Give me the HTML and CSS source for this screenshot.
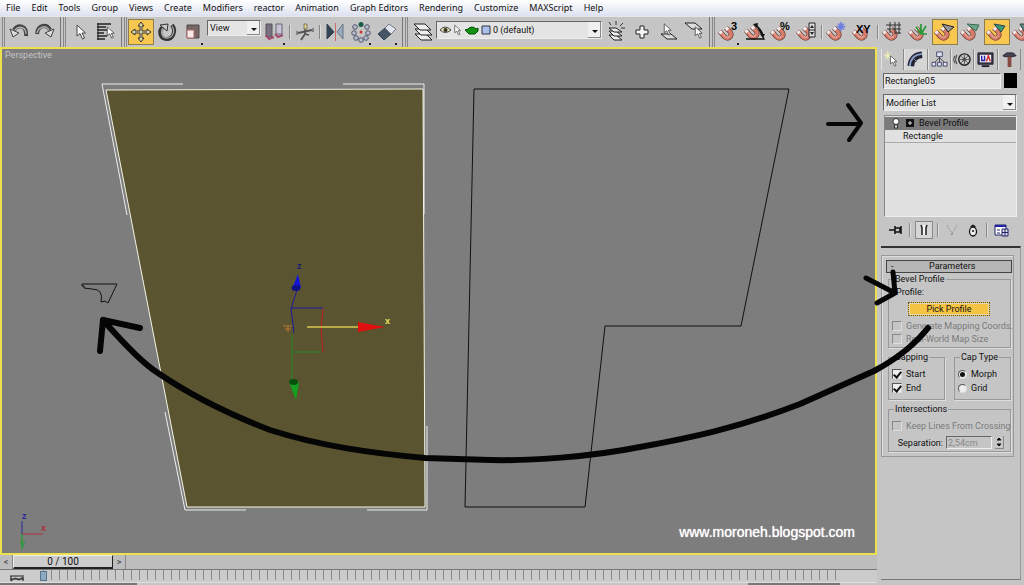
FILE: index.html
```html
<!DOCTYPE html>
<html lang="en">
<head>
<meta charset="utf-8">
<title>Perspective</title>
<link rel="stylesheet" href="styles.css">
</head>
<body>
<svg class="defs" aria-hidden="true">
  <symbol id="magnet" viewBox="0 0 20 18">
    <path d="M3 7 L8 13 Q12 17 15 13 Q17 10 14 7 L10 3" fill="none" stroke="#6d4038" stroke-width="5.500"/>
    <path d="M3 7 L8 13 Q12 17 15 13 Q17 10 14 7 L10 3" fill="none" stroke="#d87c6c" stroke-width="3.800"/>
    <path d="M6 9 L9 13 Q12 15 14 12" fill="none" stroke="#efb0a4" stroke-width="1.200"/>
    <path d="M3 7 L5 9.400 M10 3 L12.300 5.300" stroke="#eee" stroke-width="3.800"/>
  </symbol>
  <symbol id="cursor" viewBox="0 0 10 16">
    <path d="M1 1 V12 L4 9.5 L6.5 15 L8.5 14 L6 9 H9.5 Z" fill="#fff" stroke="#444" stroke-width="1"/>
  </symbol>
</svg>

<nav class="menu">
  <a href="#">File</a><a href="#">Edit</a><a href="#">Tools</a><a href="#">Group</a><a href="#">Views</a><a href="#">Create</a><a href="#">Modifiers</a><a href="#">reactor</a><a href="#">Animation</a><a href="#">Graph Editors</a><a href="#">Rendering</a><a href="#">Customize</a><a href="#">MAXScript</a><a href="#">Help</a>
</nav>

<div class="toolbar">
  <div class="group">
    <button class="tool" aria-label="Undo"><svg viewBox="0 0 24 22"><path d="M19 15 C20 4 11 3 7 9" fill="none" stroke="#444" stroke-width="4"/><path d="M19 13 C19 5 11 5 8 9" fill="none" stroke="#aaa" stroke-width="1.5"/><path d="M3 8 L6 16 L12 12 Z" fill="#ddd" stroke="#444"/></svg></button>
    <button class="tool" aria-label="Redo"><svg viewBox="0 0 24 22"><path d="M4 13 C5 3 14 3 17 9" fill="none" stroke="#444" stroke-width="4"/><path d="M4 12 C6 5 13 4 16 9" fill="none" stroke="#aaa" stroke-width="1.5"/><path d="M21 8 L18 16 L12 12 Z" fill="#ddd" stroke="#444"/></svg></button>
  </div>
  <div class="group">
    <button class="tool" aria-label="Select"><svg viewBox="0 0 24 22"><use href="#cursor" x="8" y="3" width="10" height="16"/></svg></button>
    <button class="tool" aria-label="Select by name"><svg viewBox="0 0 24 22"><path d="M3 3 H17 M3 6 H12 M3 9 H14 M3 12 H10 M3 15 H13 M3 18 H11" stroke="#222" stroke-width="1.6"/><path d="M4 2 V19" stroke="#222"/><use href="#cursor" x="12" y="5" width="9" height="13"/></svg></button>
  </div>
  <div class="group">
    <button class="tool on" aria-label="Move"><svg viewBox="0 0 24 22"><path d="M12 1 L15 5 H13 V10 H18 V8 L22 11 L18 14 V12 H13 V17 H15 L12 21 L9 17 H11 V12 H6 V14 L2 11 L6 8 V10 H11 V5 H9 Z" fill="#ddd5a8" stroke="#333"/></svg></button>
    <button class="tool" aria-label="Rotate"><svg viewBox="0 0 24 22"><path d="M17 4 C22 11 17 18 12 18 C5 18 3 10 8 6" fill="none" stroke="#333" stroke-width="4"/><path d="M17 5 C21 11 17 17 12 17 C7 17 5 11 8 7" fill="none" stroke="#aaa" stroke-width="1.3"/><path d="M5 4 L13 3 L12 10 Z" fill="#ccc" stroke="#333"/></svg></button>
    <button class="tool corner" aria-label="Scale"><svg viewBox="0 0 24 22"><path d="M6 4 H18 V17 H6 Z" fill="#766" stroke="#534848"/><path d="M6 9 H13 V17 H6 Z" fill="#f8e8e8" stroke="#a66"/></svg></button>
    <div class="combo coord"><select aria-label="Coordinate system"><option>View</option></select></div>
    <button class="tool corner" aria-label="Pivot center"><svg viewBox="0 0 24 22"><path d="M3 3 H9 V16 H3 Z" fill="#777080" stroke="#555"/><path d="M13 3 H19 V13 H13 Z" fill="#c8c2d4" stroke="#667"/><path d="M3 14 L6 18 L11 16 M12 13 L15 16 L20 14" fill="none" stroke="#a34b6b" stroke-width="2"/></svg></button>
    <span class="sep"></span>
    <button class="tool" aria-label="Manipulate"><svg viewBox="0 0 24 22"><path d="M5 12 L19 9 M12 5 V13 M12 13 L8 19 M12 13 L16 14" fill="none" stroke="#555" stroke-width="1.800"/><path d="M11 3 H14 V8 H11 Z" fill="#e9d978" stroke="#776"/><path d="M4 10 V14 M20 7 V11" stroke="#444"/></svg></button>
    <span class="sep"></span>
    <button class="tool" aria-label="Mirror"><svg viewBox="0 0 24 22"><path d="M4 3 V18 L11 11 Z" fill="#345" stroke="#345"/><path d="M20 3 V18 L14 11 Z" fill="#9ab" stroke="#678"/><path d="M12.500 2 V20" stroke="#c86b6b"/></svg></button>
    <button class="tool corner" aria-label="Array"><svg viewBox="0 0 24 22"><g fill="#b5bfd0" stroke="#556"><circle cx="6" cy="6" r="2.300"/><circle cx="18" cy="6" r="2.300"/><circle cx="5" cy="12" r="2.300"/><circle cx="19" cy="12" r="2.300"/><circle cx="7" cy="17" r="2.300"/><circle cx="17" cy="17" r="2.300"/><circle cx="12" cy="19" r="2.300"/></g><circle cx="12" cy="3.500" r="2.500" fill="#175a48"/><circle cx="12" cy="11" r="1.500" fill="#c33"/></svg></button>
    <button class="tool corner" aria-label="Align"><svg viewBox="0 0 24 22"><path d="M3 13 L10 7 L16 13 L9 19 Z" fill="#456" stroke="#345"/><path d="M10 7 L14 3 L21 8 L16 13 Z" fill="#dfe5ef" stroke="#778"/></svg></button>
  </div>
  <div class="group">
    <button class="tool" aria-label="Layer manager"><svg viewBox="0 0 24 22"><g fill="#eee" stroke="#222"><path d="M5 13 H16 L22 19 H11 Z"/><path d="M5 8 H16 L22 14 H11 Z"/><path d="M4 3 H15 L21 9 H10 Z"/></g></svg></button>
    <div class="combo layer">
      <svg class="layer-icons" viewBox="0 0 52 12"><path d="M1 6 Q6 0 12 6 Q6 11 1 6 Z" fill="#e8e4b8" stroke="#444"/><circle cx="6.500" cy="6" r="2" fill="#332"/><use href="#cursor" x="15" y="0" width="7" height="12"/><path d="M29 5 Q33 1 37 5 L39 4 V7 L36 10 H30 L26 6 Z" fill="#139313" stroke="#074f07"/><path d="M43 2 H51 V10 H43 Z" fill="#a9c1e8" stroke="#334"/></svg>
      <select aria-label="Layer"><option>0 (default)</option></select>
    </div>
    <button class="tool" aria-label="New layer"><svg viewBox="0 0 24 22"><g fill="#eee" stroke="#222"><path d="M5 14 H12 L18 19 H10 Z"/><path d="M5 10 H12 L18 15 H10 Z"/><path d="M5 7 H12 L18 11 H10 Z"/></g><path d="M5 1 L7 4 M12 0 V4 M19 2 L16 5 M21 7 H17" stroke="#333"/></svg></button>
    <button class="tool" aria-label="Add to layer"><svg viewBox="0 0 24 22"><path d="M10 5 H14 V9 H18 V13 H14 V17 H10 V13 H6 V9 H10 Z" fill="#f4f4f4" stroke="#222"/></svg></button>
    <button class="tool" aria-label="Select layer objects"><svg viewBox="0 0 24 22"><path d="M5 13 H15 L21 18 H11 Z" fill="#ddd" stroke="#222"/><use href="#cursor" x="7" y="2" width="9" height="13"/></svg></button>
    <button class="tool" aria-label="Set current layer"><svg viewBox="0 0 24 22"><path d="M3 2 H13 L20 8 H10 Z" fill="#ddd" stroke="#222"/><use href="#cursor" x="12" y="5" width="9" height="13"/></svg></button>
  </div>
  <div class="group last">
    <button class="tool corner" aria-label="Snap 3D"><svg viewBox="0 0 24 22"><use href="#magnet" y="4" width="18" height="16"/><text class="glyph" x="14" y="9">3</text></svg></button>
    <button class="tool" aria-label="Angle snap"><svg viewBox="0 0 24 22"><use href="#magnet" y="3" width="18" height="16"/><path d="M3 18 H21 L13 3 M12 4 Q19 8 20 15" fill="none" stroke="#111" stroke-width="1.300"/><path d="M10 3 L15 2 L14 7 Z M17 13 L22 13 L20 17 Z" fill="#111"/></svg></button>
    <button class="tool" aria-label="Percent snap"><svg viewBox="0 0 24 22"><use href="#magnet" y="4" width="18" height="16"/><text class="glyph" x="11" y="9">%</text></svg></button>
    <button class="tool" aria-label="Spinner snap"><svg viewBox="0 0 24 22"><use href="#magnet" y="4" width="18" height="16"/><path d="M14 2 H20 V16 H14 Z M14 9 H20" fill="#ddd" stroke="#222"/><path d="M15 7 L17 4 L19 7 Z M15 11 H19 L17 14 Z" fill="#222"/></svg></button>
    <span class="sep"></span>
    <button class="tool" aria-label="Snap to frozen"><svg viewBox="0 0 24 22"><use href="#magnet" y="4" width="18" height="16"/><path d="M16 1 V10 M11.500 5.500 H20.500 M13 2.500 L19 8.500 M19 2.500 L13 8.500" stroke="#7080e0" stroke-width="1.600"/></svg></button>
    <button class="tool" aria-label="Axis constraint snap"><svg viewBox="0 0 24 22"><use href="#magnet" y="4" width="18" height="16"/><text class="glyph" x="5" y="12">XY</text></svg></button>
    <span class="sep"></span>
    <button class="tool" aria-label="Grid snap"><svg viewBox="0 0 24 22"><use href="#magnet" y="4" width="18" height="16"/><path d="M9 1 V12 M14 1 V13 M18 1 V13 M5 4 H20 M6 8 H20 M14 12 H20" stroke="#333"/></svg></button>
    <button class="tool" aria-label="Pivot snap"><svg viewBox="0 0 24 22"><use href="#magnet" y="4" width="18" height="16"/><path d="M14 13 V3 M14 13 L9 6 M14 13 L19 5 M14 13 H20" stroke="#269a36" stroke-width="1.700"/></svg></button>
    <button class="tool on" aria-label="Vertex snap"><svg viewBox="0 0 24 22"><use href="#magnet" y="4" width="18" height="16"/><path d="M9 3 L21 6 L15 11 Z" fill="#999" stroke="#222"/></svg></button>
    <button class="tool" aria-label="Edge snap"><svg viewBox="0 0 24 22"><use href="#magnet" y="4" width="18" height="16"/><path d="M8 3 L20 4 L17 10 Z" fill="#6fa58a" stroke="#386a52"/></svg></button>
    <button class="tool on" aria-label="Face snap"><svg viewBox="0 0 24 22"><use href="#magnet" y="4" width="18" height="16"/><path d="M9 3 L20 5 L16 11 Z" fill="#3d9c70" stroke="#245"/></svg></button>
    <button class="tool" aria-label="Midpoint snap"><svg viewBox="0 0 24 22"><use href="#magnet" y="4" width="18" height="16"/><path d="M9 3 H22 V12 H14 Z" fill="#668878" stroke="#345"/></svg></button>
  </div>
</div>

<main class="work">
  <section class="stage">
    <div class="viewport">
      <svg class="scene" viewBox="2 49 873 504" preserveAspectRatio="none">
        <path d="M106 90 L423 89 L425 507 L187 507 Z" fill="#5a5530" stroke="#f4f4e4"/>
        <path d="M127 215 L102 84 H183 M343 84 H424 V214 M427 426 V510 H367 M246 510 H185 L165 412" fill="none" stroke="#eee"/>
        <path d="M474 89 H789 L741 326 H605 L585 507 H465 Z" fill="none" stroke="#111"/>
        <path d="M82 284 H117 L108 303 L105 301 L101 302 Q104 289 92 289 L84 288 V286 L82 286 Z" fill="none" stroke="#111"/>
        <path d="M297 290 L291 309 L294 333 M291 308 H323" fill="none" stroke="#1c1c9c"/>
        <path d="M298 274 L301 288 L292 289 Z" fill="#1414d8"/><ellipse cx="296" cy="288" rx="4.500" ry="3" fill="#101088"/>
        <path d="M323 309 L321 328 L323 352" fill="none" stroke="#c01c1c"/>
        <path d="M292 335 V380 M292 352 H321" stroke="#1f8a26"/>
        <path d="M289 382 L299 382 L296 400 Z" fill="#12a01e"/><ellipse cx="293.500" cy="382" rx="4.500" ry="3" fill="#064f0c"/>
        <path d="M307 327 H359" stroke="#d8c850" stroke-width="1.500"/><path d="M358 322 L385 327 L358 332 Z" fill="#e01010"/>
        <path d="M283 326 H292 M285 329 H291 M288 326 V332" stroke="#b8792e"/>
        <text class="axis" x="385" y="324" fill="#f0e060">x</text>
        <text class="axis" x="297" y="269" fill="#1c1c70">z</text>
        <path d="M22 534 V521" stroke="#2a2a9c"/><path d="M22 534 H43" stroke="#b02c3c"/><path d="M22 534 V549" stroke="#2a9a3a" stroke-width="1.500"/>
        <text class="axis" x="22" y="519" fill="#2a2a9c">z</text>
        <text class="axis" x="41" y="531" fill="#b02c3c">x</text>
        <text class="axis" x="20" y="546" fill="#2a9a3a">y</text>
      </svg>
      <span class="view-name">Perspective</span>
      <span class="site">www.moroneh.blogspot.com</span>
    </div>
    <div class="time">
      <button class="step">&lt;</button><button class="thumb">0 / 100</button><button class="step">&gt;</button>
    </div>
    <div class="track">
      <button class="curve" aria-label="Curve editor"><svg viewBox="0 0 16 8"><path d="M1 2 H15 M2 2 V7 L6 4 L10 6 L14 3 V7 M1 5 H15" fill="none" stroke="#222"/></svg></button>
      <div class="ticks"><span class="key"></span></div>
    </div>
    <div class="status"><span class="dark"></span><span class="light"></span><span class="dark end"></span></div>
  </section>

  <aside class="panel">
    <div class="tabs">
      <button class="tab" aria-label="Create"><svg viewBox="0 0 20 18"><path d="M5 0 V9 M1 5 H9 M2 2 L8 8 M8 2 L2 8" stroke="#f7f2bb"/><use href="#cursor" x="7" y="4" width="8" height="13"/></svg></button>
      <button class="tab active" aria-label="Modify"><svg viewBox="0 0 20 18"><path d="M5 16 Q6 5 17 4" fill="none" stroke="#223" stroke-width="7"/><path d="M4 16 Q5 4 17 3" fill="none" stroke="#8a9dc8" stroke-width="2"/><path d="M8 8 L12 12" stroke="#99a"/></svg></button>
      <button class="tab" aria-label="Hierarchy"><svg viewBox="0 0 20 18"><path d="M10 5 V12 M10 7 L4 13 M10 7 L16 13" stroke="#445" fill="none"/><g fill="#dde4f5" stroke="#446"><path d="M7 1 H13 V6 H7 Z M2 12 H6 V16 H2 Z M8 12 H12 V16 H8 Z M14 12 H18 V16 H14 Z"/></g></svg></button>
      <button class="tab" aria-label="Motion"><svg viewBox="0 0 20 18"><circle cx="12" cy="9" r="6" fill="#ccc" stroke="#222" stroke-width="1.500"/><circle cx="12" cy="9" r="2" fill="#222"/><path d="M12 4 V14 M7 9 H17 M8.500 5.500 L15.500 12.500 M15.500 5.500 L8.500 12.500" stroke="#555"/><path d="M4 4 Q1 9 4 14 M2 5 Q-1 9 2 13" fill="none" stroke="#333"/></svg></button>
      <button class="tab" aria-label="Display"><svg viewBox="0 0 20 18"><path d="M2 2 H18 V14 H2 Z" fill="#334" stroke="#223"/><path d="M4 4 H16 V12 H4 Z" fill="#f6eef4"/><path d="M6 5 V10 H9 V5" fill="none" stroke="#22a" stroke-width="1.500"/><path d="M11 11 L13 5 L15 11" fill="none" stroke="#c22" stroke-width="1.500"/><path d="M6 16 H14" stroke="#223" stroke-width="2"/></svg></button>
      <button class="tab" aria-label="Utilities"><svg viewBox="0 0 20 18"><path d="M3 5 L7 2 H14 L17 5 L13 6 H5 Z" fill="#445" stroke="#223"/><path d="M8 6 H12 V17 H8 Z" fill="#864b42"/></svg></button>
    </div>
    <div class="row">
      <input class="name" type="text" value="Rectangle05" aria-label="Object name">
      <button class="swatch" aria-label="Object color"></button>
    </div>
    <div class="combo modifiers"><select aria-label="Modifier List"><option>Modifier List</option></select></div>
    <ul class="stack">
      <li class="current"><svg viewBox="0 0 28 12"><circle cx="7" cy="4.500" r="3" fill="#fff" stroke="#333"/><path d="M5.500 8 H8.500 V11 H5.500 Z" fill="#eee" stroke="#333"/><path d="M17 2 H25 V10 H17 Z" fill="#111"/><path d="M19 6 H23 M21 4 V8" stroke="#ddd"/></svg>Bevel Profile</li>
      <li>Rectangle</li>
    </ul>
    <div class="stack-tools">
      <button class="mini" aria-label="Pin stack"><svg viewBox="0 0 16 14"><path d="M1 7 H7" stroke="#111" stroke-width="1.500"/><path d="M7 3 V11 M7 5 H12 V9 H7 M13 3 V11" fill="none" stroke="#111" stroke-width="1.500"/></svg></button>
      <span class="sep"></span>
      <button class="mini pressed" aria-label="Show end result"><svg viewBox="0 0 16 14"><path d="M5 2 L6 5 V12 M11 2 L10 5 V12" fill="none" stroke="#222" stroke-width="1.500"/><path d="M8 2 V12" stroke="#fff" stroke-width="1.500"/></svg></button>
      <span class="sep"></span>
      <button class="mini" aria-label="Make unique"><svg viewBox="0 0 16 14"><path d="M3 2 L5 6 L8 10 L11 6 L13 2" fill="none" stroke="#999" stroke-dasharray="2 1"/><path d="M7 10 H9 V12 H7 Z" fill="#999"/></svg></button>
      <button class="mini" aria-label="Remove modifier"><svg viewBox="0 0 16 14"><ellipse cx="8" cy="8.500" rx="3.500" ry="4.500" fill="#eee" stroke="#111" stroke-width="1.300"/><path d="M5 4 Q8 -1 11 4 Z" fill="#222"/><circle cx="8" cy="8" r="1" fill="#111"/></svg></button>
      <span class="sep"></span>
      <button class="mini" aria-label="Configure modifier sets"><svg viewBox="0 0 16 14"><path d="M2 2 H13 V12 H2 Z" fill="#fff" stroke="#226"/><path d="M2 3 H13" stroke="#22a" stroke-width="2"/><path d="M4 7 H7 M4 10 H7" stroke="#226"/><path d="M9 6 H15 V13 H9 Z" fill="#dde" stroke="#226"/><path d="M9 9.500 H15 M12 6 V13" stroke="#226"/></svg></button>
    </div>

    <div class="rollouts">
      <div class="rollout">
        <button class="head"><span>-</span><b>Parameters</b></button>
        <fieldset>
          <legend>Bevel Profile</legend>
          <span class="line">Profile:</span>
          <button class="pick">Pick Profile</button>
          <label class="line off"><input type="checkbox" disabled>Generate Mapping Coords.</label>
          <label class="line off"><input type="checkbox" disabled>Real-World Map Size</label>
        </fieldset>
        <div class="pair">
          <fieldset>
            <legend>Capping</legend>
            <label class="line tall"><input type="checkbox" checked>Start</label>
            <label class="line tall"><input type="checkbox" checked>End</label>
          </fieldset>
          <fieldset>
            <legend>Cap Type</legend>
            <label class="line tall"><input type="radio" name="cap" checked>Morph</label>
            <label class="line tall"><input type="radio" name="cap">Grid</label>
          </fieldset>
        </div>
        <fieldset>
          <legend>Intersections</legend>
          <label class="line cross off"><input type="checkbox" disabled>Keep Lines From Crossing</label>
          <div class="separation">
            <label for="separation">Separation:</label>
            <input id="separation" type="text" value="2,54cm" disabled>
            <button class="spinner" aria-label="Adjust separation"><svg viewBox="0 0 8 12"><path d="M2 4 L4 2 L6 4 Z M2 8 H6 L4 10 Z" fill="#111" stroke="#111"/></svg></button>
          </div>
        </fieldset>
      </div>
    </div>
  </aside>
</main>

<svg class="marks" viewBox="0 0 1024 585" preserveAspectRatio="none" aria-hidden="true">
  <g fill="none" stroke="#050505" stroke-linecap="round" stroke-linejoin="round">
    <path stroke-width="6" d="M928 328 Q908 353 874 371 L800 404 C738 428 690 438 640 447 C590 457 530 461 490 460 L425 458 C370 453 320 446 270 430 Q205 405 158 373 Q140 362 103 320"/>
    <path stroke-width="6" d="M140 328 L103 320 L100 351"/>
    <path stroke-width="4" d="M828 124 H860 M848 105 L861 123 L849 140"/>
    <path stroke-width="5" d="M866 278 L895 293 M893 272 L895 293 L877 303"/>
  </g>
</svg>
</body>
</html>
```
FILE: styles.css
```css
* { box-sizing: border-box; }

body {
  margin: 0;
  height: 100vh;
  display: flex;
  flex-direction: column;
  overflow: hidden;
  position: relative;
  background: #c5c5c5;
  color: #111;
  font: 9px/12px Roboto, "Liberation Sans", sans-serif;
}

button, input, select { font: inherit; color: inherit; margin: 0; padding: 0; border: 0; border-radius: 0; background: none; }
svg { display: block; }
.defs { position: absolute; width: 0; height: 0; }

.menu {
  flex: none;
  display: flex;
  gap: 11px;
  height: 16px;
  padding: 0 6px;
  line-height: 15px;
  font-family: "Noto Sans", sans-serif;
  background: linear-gradient(#fff, #dde1f0);
}
.menu a { color: #111; text-decoration: none; }

.toolbar { flex: none; display: flex; height: 31px; overflow: hidden; border-top: 1px solid #e6e6e6; }
.group {
  flex: none;
  display: flex;
  align-items: center;
  padding: 0 2px 0 6px;
  border-right: 1px solid #777;
  background: linear-gradient(90deg, #c5c5c5 2px, #888 2px 3px, #c5c5c5 3px 4px, #888 4px 5px, #c5c5c5 5px);
}
.group.last { border: 0; }
.tool { flex: none; width: 26px; height: 26px; padding: 2px 1px; }
.tool svg { width: 24px; height: 22px; }
.tool.on { background: #f8c74f; border: 1px solid #8b7d50; padding: 1px 0; }
.tool.corner { background: linear-gradient(#222, #222) right 3px bottom 0 / 2px 2px no-repeat; }
.glyph { font: bold 11px "Liberation Sans", sans-serif; }
.sep { flex: none; width: 4px; height: 14px; background: linear-gradient(90deg, transparent 1px, #888 1px 2px, #ddd 2px 3px, transparent 3px); }

.combo {
  position: relative;
  display: flex;
  align-items: center;
  background: #e4e4e4;
  border: 1px solid #666;
  border-right-color: #eee;
  border-bottom-color: #eee;
}
.combo select { flex: 1; min-width: 0; height: 100%; padding-left: 2px; appearance: none; }
.combo::before { content: ""; position: absolute; right: 0; top: 0; bottom: 0; width: 12px; background: #f0f0f0; border-right: 1px solid #888; border-bottom: 1px solid #888; pointer-events: none; }
.combo::after { content: ""; position: absolute; right: 3px; top: 50%; border: 3px solid transparent; border-top-color: #111; pointer-events: none; }
.coord { width: 54px; height: 16px; margin: 0 1px 8px; }
.layer { width: 166px; height: 18px; margin: 0 1px 4px; }
.layer-icons { width: 52px; height: 12px; margin-left: 2px; }

.work { flex: 1; min-height: 0; display: grid; grid-template-columns: minmax(0, 1fr) 147px; }
.stage { display: flex; flex-direction: column; min-height: 0; }
.viewport { flex: 1; min-height: 0; position: relative; background: #7d7d7d; border: 2px solid #ece14d; }
.scene { width: 100%; height: 100%; }
.axis { font: bold 9px "Liberation Sans", sans-serif; }
.view-name { position: absolute; left: 3px; top: 0; color: #c4c4c4; }
.site { position: absolute; right: 20px; bottom: 13px; color: #fff; font: 14px/16px "Liberation Sans", Arial, sans-serif; text-shadow: 0 0 1px #fff; }

.time { flex: none; display: flex; height: 15px; background: #bdbdbd; border-bottom: 1px solid #777; }
.step { width: 13px; border-right: 1px solid #888; color: #333; }
.thumb { width: 100px; background: #cdcdcd; border: 1px solid #eee; border-right: 1px solid #222; border-bottom: 2px solid #222; font-size: 10px; line-height: 11px; }
.track { flex: none; display: flex; height: 12px; background: #cbcbcb; }
.curve { width: 40px; padding: 3px 0 0 9px; }
.curve svg { width: 16px; height: 8px; }
.ticks { flex: none; width: calc(100% - 78px); height: 10px; padding-top: 1px; background: repeating-linear-gradient(90deg, transparent 0 3px, #888 3px 4px, transparent 4px 8px); }
.key { display: block; width: 7px; height: 10px; background: #8fa9c0; border: 1px solid #58758f; }
.status { flex: none; display: flex; height: 3px; border-top: 1px solid #ddd; }
.dark { width: 137px; background: #777; }
.dark.end { width: 92px; }
.light { width: 611px; }

.panel { min-width: 0; padding: 2px 3px 5px 4px; display: flex; flex-direction: column; }
.tabs { flex: none; display: flex; height: 21px; }
.tab { flex: 1; padding: 1px; border-right: 1px solid #8a8a8a; border-left: 1px solid #e4e4e4; }
.tab.active { background: #d6d6d6; }
.tab svg { width: 19px; height: 17px; margin: auto; }
.row { display: flex; gap: 3px; margin: 3px 4px 0 2px; }
.name { flex: 1; min-width: 0; height: 16px; padding-left: 1px; background: #e4e4e4; border: 1px solid #666; border-right-color: #eee; border-bottom-color: #eee; }
.swatch { width: 13px; height: 15px; background: #000; }
.modifiers { height: 17px; margin: 5px 4px 4px 2px; }
.stack { flex: none; height: 102px; margin: 0 4px 0 3px; padding: 1px 0; list-style: none; background: #e1e1e1; border: 1px solid #888; border-right-color: #eee; border-bottom-color: #eee; }
.stack li { display: flex; height: 13px; padding-left: 18px; line-height: 13px; border-bottom: 1px solid #aaa; }
.stack li.current { padding-left: 4px; background: #7b7b7b; border-color: #7b7b7b; gap: 2px; }
.stack svg { width: 28px; height: 12px; }
.stack-tools { flex: none; display: flex; align-items: center; justify-content: space-between; height: 29px; padding: 0 11px 4px 6px; }
.mini { width: 18px; height: 18px; padding: 2px 1px; }
.mini svg { width: 16px; height: 14px; }
.mini.pressed { background: #d6d6d6; border: 1px solid #888; padding: 1px 0; }

.rollouts { flex: 1; min-height: 0; padding: 7px 6px 0 0; border-top: 2px solid #333; border-right: 1px solid #999; border-bottom: 1px solid #777; }
.rollout { padding: 4px 1px 1px 4px; border: 1px solid #999; box-shadow: inset 1px 1px #ddd; }
.head { display: flex; width: 100%; height: 13px; padding-left: 4px; line-height: 11px; background: #b5b5b5; border: 1px solid #444; }
.head b { flex: 1; font-weight: normal; }
fieldset { min-width: 0; margin: 0 1px 3px 2px; padding: 0 2px 2px; border: 1px solid #999; box-shadow: 1px 1px #ddd; }
legend { margin-left: 3px; padding: 0 1px; line-height: 12px; }
.line { display: flex; align-items: center; gap: 4px; height: 13px; padding-left: 1px; white-space: nowrap; }
span.line { padding-left: 5px; }
.tall { height: 14px; }
.off { color: #7b7b7b; }
.pick { display: block; width: 82px; height: 14px; margin: 4px 0 3px 17px; line-height: 12px; background: #f6c445; border: 1px dotted #665520; outline: 1px solid #ded6b8; outline-offset: -2px; }
.line input { flex: none; width: 10px; height: 10px; appearance: none; display: grid; place-items: center; background: #eee; border: 1px solid #555; border-right-color: #ddd; border-bottom-color: #ddd; }
.line input:disabled { background: #c5c5c5; border-color: #888 #ddd #ddd #888; }
.line input[type="checkbox"]:checked::before { content: ""; width: 3px; height: 6px; border: solid #111; border-width: 0 2px 2px 0; transform: rotate(40deg); }
.line input[type="radio"] { width: 9px; height: 9px; border-radius: 50%; }
.line input[type="radio"]:checked::before { content: ""; width: 5px; height: 5px; border-radius: 50%; background: #111; }
.pair { display: flex; justify-content: space-between; }
.pair fieldset { width: 57px; padding-top: 4px; padding-bottom: 4px; }
.cross { margin-top: 4px; }
.separation { display: flex; align-items: center; justify-content: flex-end; gap: 3px; padding: 4px 4px 0 0; }
.separation input { width: 46px; height: 13px; padding-left: 1px; color: #888; border: 1px solid #666; border-right-color: #eee; border-bottom-color: #eee; }
.spinner { width: 9px; height: 13px; border-right: 1px solid #888; border-bottom: 1px solid #888; }
.spinner svg { width: 8px; height: 12px; }

.marks { position: absolute; inset: 0; width: 100%; height: 100%; pointer-events: none; }
```
